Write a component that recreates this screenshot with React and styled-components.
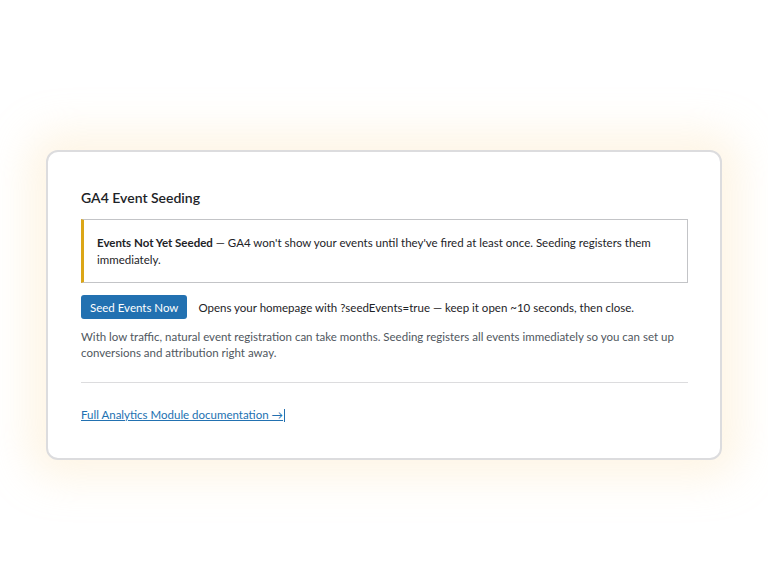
import React from "react";
import styled, { createGlobalStyle } from "styled-components";

const Global = createGlobalStyle`
  html, body { margin: 0; background: #fff; }
  body { font-family: Lato, "Open Sans", sans-serif; color: #1d2327; }
`;

const Page = styled.div`
  width: 768px; height: 576px;
  display: flex; align-items: flex-start; justify-content: center;
  padding-top: 150px; box-sizing: border-box;
`;

const Card = styled.div`
  width: 676px; box-sizing: border-box;
  background: #fff; border: 2px solid #dcdcde; border-radius: 12px;
  box-shadow: 0 0 40px 18px rgba(253, 226, 180, 0.35);
  padding: 36px 32px 35px 33px;
`;

const Title = styled.h2`
  margin: 0 0 11px; font-size: 14px; font-weight: 600; line-height: 20px; color: #1d2327;
`;

const Notice = styled.div`
  border: 1px solid #c3c4c7; border-left: 3px solid #dba617;
  padding: 14px 13px; font-size: 11.5px; line-height: 17px; color: #1d2327; background: #fff;
  strong { font-weight: 700; }
`;

const Row = styled.div`
  display: flex; align-items: center; gap: 11px; margin-top: 12px;
  font-size: 11.5px; color: #1d2327;
`;

const Button = styled.button`
  background: #2271b1; color: #fff; border: none; border-radius: 3px;
  font: inherit; font-size: 11.5px; height: 24px; padding: 0 9px; cursor: pointer;
`;

const Para = styled.p`
  margin: 10px 0 0; font-size: 11.5px; line-height: 16px; color: #50575e;
`;

const Rule = styled.hr`
  border: none; border-top: 1px solid #dcdcde; margin: 21px 0 20px;
`;

const Link = styled.a`
  font-size: 11.5px; color: #2271b1; text-decoration: underline; line-height: 16px;
  display: inline-flex; align-items: center;
`;

const Caret = styled.span`
  display: inline-block; width: 1px; height: 13px; background: #2271b1; margin-left: 1px;
`;

export default function App() {
  return (
    <>
      <Global />
      <Page>
        <Card>
          <Title>GA4 Event Seeding</Title>
          <Notice>
            <strong>Events Not Yet Seeded</strong> — GA4 won't show your events until they've fired at least once. Seeding registers them immediately.
          </Notice>
          <Row>
            <Button>Seed Events Now</Button>
            <span>Opens your homepage with ?seedEvents=true — keep it open ~10 seconds, then close.</span>
          </Row>
          <Para>
            With low traffic, natural event registration can take months. Seeding registers all events immediately so you can set up conversions and attribution right away.
          </Para>
          <Rule />
          <Link href="#">Full Analytics Module documentation →<Caret /></Link>
        </Card>
      </Page>
    </>
  );
}
